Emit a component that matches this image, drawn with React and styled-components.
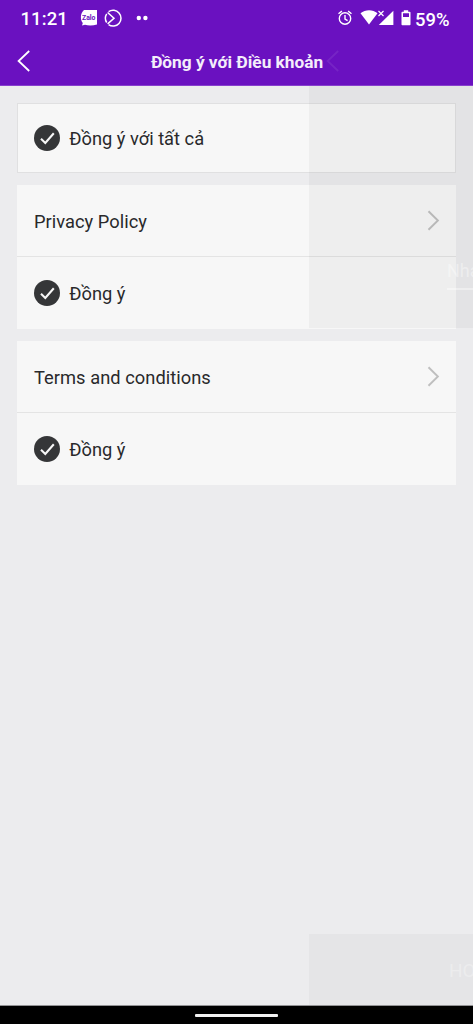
import React from 'react'
import styled, { createGlobalStyle } from 'styled-components';

const GlobalStyle = createGlobalStyle`
*{
    box-sizing:border-box;
}
body{
    margin:0;
    background:#ececee;
    font-family:Roboto, "Noto Sans", sans-serif;
}
`;

const CheckIcon = () => (
    <CheckCircle>
        <svg width="26.400" height="26.400" viewBox="0 0 26.400 26.400" fill="none">
            <path d="M7 13.700l4.300 4.200 8.500-9.700" stroke="#f7f7f7" strokeWidth="2.100" />
        </svg>
    </CheckCircle>
)

const NextIcon = () => (
    <svg width="13" height="21" viewBox="0 0 13 21" fill="none">
        <path d="M1.500 1.200l9.400 9.300-9.400 9.300" stroke="#bfbfbf" strokeWidth="1.900" />
    </svg>
)

const BackIcon = () => (
    <svg width="14" height="22" viewBox="0 0 14 22" fill="none">
        <path d="M13.200 1L2.600 11l10.600 10" stroke="#fff" strokeWidth="1.800" />
    </svg>
)

const StatusIcons = () => (
    <svg width="76" height="22" viewBox="78 7 76 22">
        <path d="M84 10h13v14.500c-4 1.200-9 1.200-12 .2l-3 .8.800-2.500c-2.600-3-2.800-9.500 1.200-13z" fill="#fff" />
        <text x="82" y="19.700" fontSize="7" fontWeight="700" textLength="13.500" lengthAdjust="spacingAndGlyphs" fill="#6a11c0">Zalo</text>
        <path d="M108.600 11.700a7.900 7.900 0 1 1 0 13M106.700 22.500a8 8 0 0 1 0-8.600" fill="none" stroke="#fff" strokeWidth="1.500" />
        <path d="M107.600 12.500l6.400 5.700-6.400 5.700" fill="none" stroke="#fff" strokeWidth="1.500" />
        <circle cx="138.800" cy="18" r="2.200" fill="#fff" />
        <circle cx="145.400" cy="18" r="2.200" fill="#fff" />
    </svg>
)

const SystemIcons = () => (
    <svg width="76" height="22" viewBox="336 7 76 22">
        <g fill="none" stroke="#fff" strokeWidth="1.400">
            <circle cx="345" cy="18.500" r="5.700" />
            <path d="M345 15v4l2.600 1.700M338.500 13.800l3.400-2.700M351.500 13.800l-3.400-2.700" />
        </g>
        <path d="M360.500 13.300c5-4.100 12.200-4.100 17 0l-8.500 11.200z" fill="#fff" />
        <path d="M378.500 11l5 5M383.500 11l-5 5" stroke="#fff" strokeWidth="1.200" />
        <path d="M393.400 10.800v14.100h-14.600z" fill="#fff" />
        <path d="M403.800 10.200h4.400v1.500h1.500c.5 0 .8.300.8.800v12c0 .4-.3.800-.8.800h-7.400c-.4 0-.8-.4-.8-.8v-12c0-.5.4-.8.800-.8h1.500zM403 13.300V17h6v-3.700z" fill="#fff" fillRule="evenodd" />
    </svg>
)

const AgreeRow = ({ label, compact }) => (
    <Row $compact={compact}>
        <CheckIcon />
        <Label>{label}</Label>
    </Row>
)

const PolicyCard = ({ title, spacing }) => (
    <Card>
        <Row $divided>
            <Title $spacing={spacing}>{title}</Title>
            <NextIcon />
        </Row>
        <AgreeRow label="Đồng ý" />
    </Card>
)

export default function App() {
    return (
        <Screen>
            <GlobalStyle />
            <StatusBar>
                <Time>11:21</Time>
                <StatusIcons />
                <Spacer />
                <SystemIcons />
                <Battery>59%</Battery>
            </StatusBar>
            <Header>
                <BackButton aria-label="Back"><BackIcon /></BackButton>
                <HeaderTitle>Đồng ý với Điều khoản</HeaderTitle>
                <GhostBack><BackIcon /></GhostBack>
            </Header>
            <Content>
                <Card $outlined>
                    <AgreeRow label="Đồng ý với tất cả" compact />
                </Card>
                <PolicyCard title="Privacy Policy" spacing=".03px" />
                <PolicyCard title="Terms and conditions" spacing=".04px" />
            </Content>
            <NavBar><Pill /></NavBar>
            <NextScreenTop>
                <GhostField>Nha</GhostField>
            </NextScreenTop>
            <NextScreenBottom>HO</NextScreenBottom>
        </Screen>
    )
}

const Screen = styled.div`
position:relative;
display:flex;
flex-direction:column;
height:1024px;
overflow:hidden;
color:#29292b;
`;

const StatusBar = styled.div`
display:flex;
align-items:center;
height:36px;
padding:0 22px 0 20px;
background:#6a11c0;
color:#fff;
font-weight:500;
svg{
    flex:none;
}
`;

const Time = styled.span`
width:58px;
padding:2px 0 0 .5px;
font-size:18.5px;
letter-spacing:.1px;
`;

const Battery = styled.span`
width:36px;
margin-left:3px;
padding-top:2px;
font-size:18.4px;
`;

const Spacer = styled.div`
flex:1;
`;

const Header = styled.header`
position:relative;
display:flex;
align-items:center;
justify-content:center;
height:50px;
background:#6a11c0;
border-bottom:1px solid #873fcd;
color:#f4edfb;
`;

const BackButton = styled.button`
position:absolute;
left:16px;
top:14px;
padding:0;
border:0;
background:none;
line-height:0;
`;

const GhostBack = styled.div`
position:absolute;
left:325px;
top:14px;
line-height:0;
opacity:.08;
`;

const HeaderTitle = styled.h1`
margin:3px 0 0 1px;
font-size:17.3px;
font-weight:700;
letter-spacing:-.02px;
white-space:nowrap;
`;

const Content = styled.main`
flex:1;
display:flex;
flex-direction:column;
gap:12px;
padding:17px 17px 0;
border-bottom:1px solid #929294;
`;

const Card = styled.section`
height:${props => props.$outlined ? '70px' : '144px'};
background:#f7f7f7;
outline:${props => props.$outlined ? '1px solid #e0e0e1' : 'none'};
outline-offset:-1px;
`;

const Row = styled.div`
display:flex;
align-items:center;
height:${props => props.$compact ? '70px' : '72px'};
padding:0 16px 0 17px;
border-bottom:${props => props.$divided ? '1px solid #e4e4e4' : '0'};
`;

const CheckCircle = styled.span`
flex:none;
width:26.4px;
height:26.4px;
border-radius:50%;
background:#353638;
line-height:0;
`;

const Label = styled.span`
margin-left:8.8px;
padding-top:1px;
font-size:18.3px;
white-space:nowrap;
`;

const Title = styled.span`
flex:1;
padding-top:1px;
font-size:18.3px;
letter-spacing:${props => props.$spacing};
`;

const NavBar = styled.div`
display:flex;
align-items:center;
justify-content:center;
height:18px;
background:#000;
`;

const Pill = styled.div`
width:83px;
height:3px;
border-radius:1px;
background:#f2f2f2;
`;

const NextScreenTop = styled.div`
position:absolute;
left:309px;
right:0;
top:86px;
height:242px;
padding:174px 0 0 138px;
overflow:hidden;
background:rgba(0, 0, 0, .035);
pointer-events:none;
`;

const GhostField = styled.div`
height:30px;
border-bottom:2px solid rgba(255, 255, 255, .4);
color:rgba(255, 255, 255, .4);
font-size:18px;
white-space:nowrap;
`;

const NextScreenBottom = styled.div`
position:absolute;
left:309px;
right:0;
top:934px;
height:71px;
padding-left:140px;
overflow:hidden;
background:rgba(0, 0, 0, .028);
color:rgba(255, 255, 255, .3);
font-size:19px;
line-height:73px;
white-space:nowrap;
`;
